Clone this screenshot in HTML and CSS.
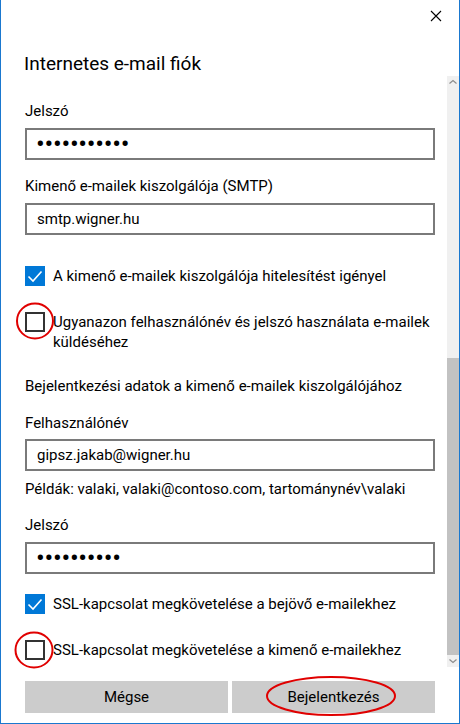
FILE: index.html
```html
<!DOCTYPE html>
<html lang="hu">
<head>
    <meta charset="UTF-8">
    <meta name="viewport" content="width=device-width, initial-scale=1.0">
    <title>Internetes e-mail fiók</title>
    <link rel="stylesheet" href="styles.css">
</head>
<body>
    <div class="window">
        <div class="titlebar">
            <button class="close" type="button" aria-label="Bezárás">
                <svg width="12" height="12" viewBox="0 0 12 12">
                    <path d="M1 1 L11 11 M11 1 L1 11" stroke="#000" stroke-width="1.1" fill="none"/>
                </svg>
            </button>
        </div>
        <h1 class="title">Internetes e-mail fiók</h1>

        <div class="body">
            <div class="scroll">
                <div class="field first">
                    <label for="pw1">Jelszó</label>
                    <input type="password" id="pw1" value="xxxxxxxxxxx">
                </div>
                <div class="field">
                    <label for="smtp">Kimenő e-mailek kiszolgálója (SMTP)</label>
                    <input type="text" id="smtp" value="smtp.wigner.hu">
                </div>

                <div class="check checked gap-lg">
                    <span class="box">
                        <svg width="20" height="20" viewBox="0 0 20 20">
                            <path d="M3.5 10.5 L8 15 L16.5 5.5" stroke="#fff" stroke-width="1.6" fill="none"/>
                        </svg>
                    </span>
                    <span class="text">A kimenő e-mailek kiszolgálója hitelesítést igényel</span>
                </div>
                <div class="check gap-md">
                    <span class="box"></span>
                    <span class="text">Ugyanazon felhasználónév és jelszó használata e-mailek küldéséhez</span>
                </div>

                <p class="note">Bejelentkezési adatok a kimenő e-mailek kiszolgálójához</p>

                <div class="field tight">
                    <label for="user">Felhasználónév</label>
                    <input type="text" id="user" value="gipsz.jakab@wigner.hu">
                </div>
                <p class="hint">Példák: valaki, valaki@contoso.com, tartománynév\valaki</p>
                <div class="field">
                    <label for="pw2">Jelszó</label>
                    <input type="password" id="pw2" value="xxxxxxxxxx">
                </div>

                <div class="check checked gap-sm">
                    <span class="box">
                        <svg width="20" height="20" viewBox="0 0 20 20">
                            <path d="M3.5 10.5 L8 15 L16.5 5.5" stroke="#fff" stroke-width="1.6" fill="none"/>
                        </svg>
                    </span>
                    <span class="text">SSL-kapcsolat megkövetelése a bejövő e-mailekhez</span>
                </div>
                <div class="check gap-md">
                    <span class="box"></span>
                    <span class="text">SSL-kapcsolat megkövetelése a kimenő e-mailekhez</span>
                </div>
            </div>

            <div class="scrollbar">
                <svg class="arrow" width="12" height="12" viewBox="0 0 12 12">
                    <path d="M2.5 7.5 L6 4.5 L9.5 7.5" stroke="#8c8c8c" stroke-width="1.2" fill="none"/>
                </svg>
                <div class="track">
                    <div class="thumb"></div>
                </div>
                <svg class="arrow" width="12" height="12" viewBox="0 0 12 12">
                    <path d="M2.5 4.5 L6 7.5 L9.5 4.5" stroke="#8c8c8c" stroke-width="1.2" fill="none"/>
                </svg>
            </div>
        </div>

        <div class="footer">
            <button type="button">Mégse</button>
            <button type="button">Bejelentkezés</button>
        </div>

        <!-- red markers drawn over the screenshot -->
        <svg class="marks" width="460" height="724" viewBox="0 0 460 724">
            <ellipse cx="35" cy="321" rx="18" ry="17.5"/>
            <ellipse cx="34" cy="650" rx="18.5" ry="17.5"/>
            <ellipse cx="331" cy="696" rx="64" ry="19"/>
        </svg>
    </div>
</body>
</html>
```

FILE: styles.css
```css
html, body {
    margin: 0;
    padding: 0;
    background: #fff;
}

body {
    font-family: "Segoe UI", Roboto, "Noto Sans", sans-serif;
    font-size: 15px;
    color: #000;
}

.window {
    position: relative;
    width: 460px;
    height: 724px;
    box-sizing: border-box;
    border: 1px solid #1a78cf;
    border-top: none;
    display: flex;
    flex-direction: column;
    overflow: hidden;
}

.titlebar {
    height: 32px;
    display: flex;
    justify-content: flex-end;
}

.close {
    width: 46px;
    height: 32px;
    border: none;
    background: none;
    padding: 0;
    display: flex;
    align-items: center;
    justify-content: center;
}

.title {
    margin: 20px 0 0 23px;
    font-size: 19px;
    line-height: 24px;
    font-weight: normal;
}

.body {
    flex: 1;
    display: flex;
    min-height: 0;
}

.scroll {
    flex: 1;
    padding: 0 12px 0 24px;
    overflow: hidden;
}

.field {
    margin-top: 16px;
}

.field.first {
    margin-top: 25px;
}

.field.tight {
    margin-top: 17px;
}

.field label {
    display: block;
    line-height: 20px;
    margin-bottom: 7px;
}

.field.tight label {
    margin-bottom: 6px;
}

.field input {
    display: block;
    width: 100%;
    height: 32px;
    box-sizing: border-box;
    border: 2px solid #7a7a7a;
    padding: 0 10px;
    font-family: inherit;
    font-size: 15px;
    color: #000;
    background: #fff;
    outline: none;
}

.field input[type="password"] {
    font-size: 26px;
    letter-spacing: -0.3px;
    padding-left: 9px;
}

.check {
    display: flex;
    align-items: flex-start;
    gap: 8px;
    line-height: 20px;
}

.gap-lg { margin-top: 31px; }
.gap-md { margin-top: 26px; }
.gap-sm { margin-top: 20px; }

.check .box {
    flex: none;
    width: 20px;
    height: 20px;
    box-sizing: border-box;
    border: 2px solid #333;
}

.check.checked .box {
    border: none;
    background: #0078d7;
}

.check .box svg {
    display: block;
}

.note {
    margin: 24px 0 0;
    line-height: 20px;
}

.hint {
    margin: 8px 0 0;
    line-height: 20px;
}

.scrollbar {
    width: 12px;
    background: #f0f0f0;
    display: flex;
    flex-direction: column;
}

.arrow {
    flex: none;
    display: block;
}

.track {
    flex: 1;
    display: flex;
    flex-direction: column;
    justify-content: flex-end;
}

.thumb {
    height: 297px;
    background: #c2c2c2;
}

.footer {
    height: 56px;
    box-sizing: border-box;
    padding: 14px 0 10px 24px;
    display: flex;
    gap: 4px;
}

.footer button {
    width: 203px;
    height: 32px;
    border: none;
    background: #cccccc;
    font-family: inherit;
    font-size: 15px;
    color: #000;
    padding: 0;
}

.marks {
    position: absolute;
    left: -1px;
    top: 0;
    pointer-events: none;
}

.marks ellipse {
    fill: none;
    stroke: #e00000;
    stroke-width: 2;
}
```
